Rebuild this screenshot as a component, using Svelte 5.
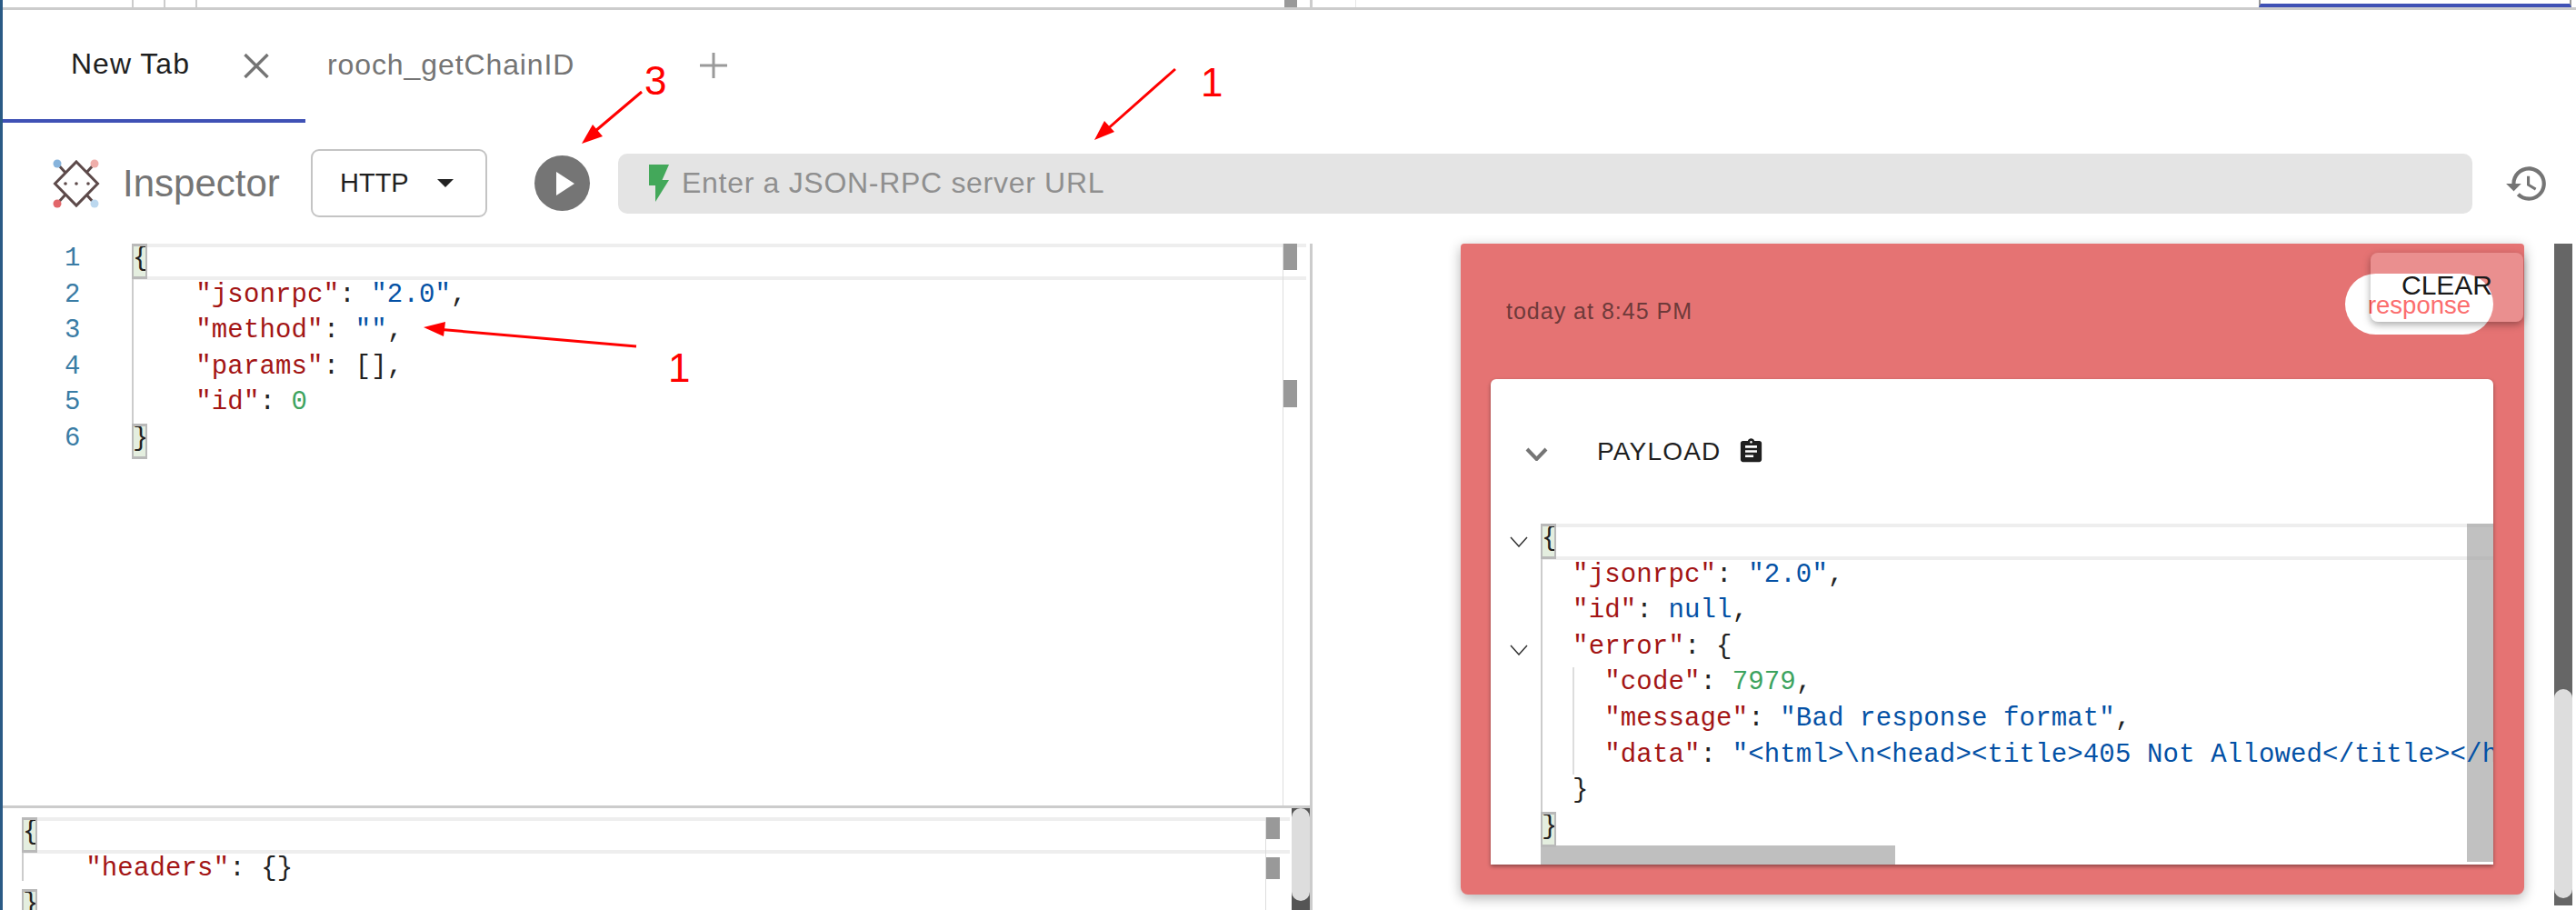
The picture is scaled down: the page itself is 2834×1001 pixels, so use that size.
<script>
  const requestLines = [
    [["p", "{"]],
    [["p", "    "], ["k", '"jsonrpc"'], ["p", ": "], ["s", '"2.0"'], ["p", ","]],
    [["p", "    "], ["k", '"method"'], ["p", ": "], ["s", '""'], ["p", ","]],
    [["p", "    "], ["k", '"params"'], ["p", ": [],"]],
    [["p", "    "], ["k", '"id"'], ["p", ": "], ["n", "0"]],
    [["p", "}"]],
  ];

  const headerLines = [
    [["p", "{"]],
    [["p", "    "], ["k", '"headers"'], ["p", ": {}"]],
    [["p", "}"]],
  ];

  const responseLines = [
    [["p", "{"]],
    [["p", "  "], ["k", '"jsonrpc"'], ["p", ": "], ["s", '"2.0"'], ["p", ","]],
    [["p", "  "], ["k", '"id"'], ["p", ": "], ["s", "null"], ["p", ","]],
    [["p", "  "], ["k", '"error"'], ["p", ": {"]],
    [["p", "    "], ["k", '"code"'], ["p", ": "], ["n", "7979"], ["p", ","]],
    [["p", "    "], ["k", '"message"'], ["p", ": "], ["s", '"Bad response format"'], ["p", ","]],
    [["p", "    "], ["k", '"data"'], ["p", ": "], ["s", '"<html>\\n<head><title>405 Not Allowed</title></head>\\n<body>'], ["p", ""]],
    [["p", "  }"]],
    [["p", "}"]],
  ];

  const isBracket = (i, total) => i === 0 || i === total - 1;
</script>

{#snippet code(lines)}
  {#each lines as line, i}
    <div class="line" class:hl={i === 0}>
      {#if isBracket(i, lines.length)}
        <span class="match">{line[0][1]}</span>
      {:else}
        {#each line as t}<span class={t[0]}>{t[1]}</span>{/each}
      {/if}
    </div>
  {/each}
{/snippet}

<div class="page">
  <div class="strip">
    <i class="tick first"></i><i class="tick"></i><i class="tick"></i>
    <i class="strip-thumb"></i>
    <i class="tick last"></i>
    <i class="tick faint"></i>
    <i class="strip-blue"></i>
  </div>

  <div class="tabs">
    <div class="tab active">
      <span>New Tab</span>
      <svg class="close" viewBox="0 0 28 28"><path d="M1 1 27 27M27 1 1 27" /></svg>
    </div>
    <div class="tab other">rooch_getChainID</div>
    <svg class="plus" viewBox="0 0 30 28"><path d="M15 0V28M0 14H30" /></svg>
  </div>

  <div class="toolbar">
    <svg class="logo" viewBox="0 0 52 60">
      <path class="wire" d="M5 8 14 18M46 8 37 18M5 52 14 42M46 52 37 42" />
      <path class="wire" d="M26 6 49.5 30 26 54 2.500 30Z" />
      <circle cx="14" cy="30" r="1.800" fill="#5d4a4a" />
      <circle cx="26" cy="30" r="1.800" fill="#5d4a4a" />
      <circle cx="39" cy="30" r="1.800" fill="#5d4a4a" />
      <circle cx="5" cy="8" r="4.500" fill="#86b3dc" />
      <circle cx="46" cy="8" r="4.500" fill="#efaeaa" />
      <circle cx="5" cy="52" r="4.500" fill="#e2666a" />
      <circle cx="46" cy="52" r="4.500" fill="#bcd8ef" />
    </svg>
    <span class="brand">Inspector</span>
    <div class="select"><span>HTTP</span><i class="caret"></i></div>
    <div class="play"><i></i></div>
    <div class="url">
      <svg class="bolt" viewBox="0 0 22 41"><path d="M0 0H22L14.500 17H22L7 41V23H0Z" /></svg>
      <span>Enter a JSON-RPC server URL</span>
    </div>
    <svg class="history" viewBox="0 0 24 24">
      <path d="M13 3c-4.970 0-9 4.030-9 9H1l3.890 3.890.070.140L9 12H6c0-3.870 3.130-7 7-7s7 3.130 7 7-3.130 7-7 7c-1.930 0-3.680-.790-4.940-2.060l-1.420 1.420C8.270 19.990 10.510 21 13 21c4.970 0 9-4.030 9-9s-4.030-9-9-9zm-1 5v5l4.280 2.540.720-1.210-3.500-2.080V8H12z" />
    </svg>
  </div>

  <div class="main">
    <div class="left">
      <div class="editor request">
        <div class="numbers">
          {#each requestLines as _, i}<div class="line">{i + 1}</div>{/each}
        </div>
        <div class="content">{@render code(requestLines)}</div>
        <i class="minimap"><b></b><b class="second"></b></i>
      </div>
      <div class="editor headers">
        <div class="content">{@render code(headerLines)}</div>
        <i class="minimap"><b></b><b class="second"></b></i>
        <div class="pane-scroll"><i></i></div>
      </div>
    </div>

    <div class="right">
      <div class="card">
        <div class="card-head">today at 8:45 PM</div>
        <div class="chip">response</div>
        <div class="clear">CLEAR</div>
        <div class="inner">
          <div class="payload">
            <svg class="chev" viewBox="0 0 25 15"><path d="M2 2 12.500 13 23 2" /></svg>
            <span>PAYLOAD</span>
            <svg class="clip" viewBox="0 0 24 24">
              <path d="M19 3h-4.180C14.400 1.840 13.300 1 12 1c-1.300 0-2.400.840-2.820 2H5c-1.100 0-2 .900-2 2v14c0 1.100.900 2 2 2h14c1.100 0 2-.900 2-2V5c0-1.100-.900-2-2-2zm-7 0c.550 0 1 .450 1 1s-.450 1-1 1-1-.450-1-1 .450-1 1-1zm2 14H7v-2h7v2zm3-4H7v-2h10v2zm0-4H7V7h10v2z" />
            </svg>
          </div>
          <div class="editor response">
            <div class="folds">
              {#each responseLines as _, i}
                <div class="line">
                  {#if i === 0 || i === 3}
                    <svg viewBox="0 0 20 12"><path d="M1 1 10 11 19 1" /></svg>
                  {/if}
                </div>
              {/each}
            </div>
            <div class="content">
              {@render code(responseLines)}
              <i class="guide"></i>
            </div>
            <i class="vbar"></i>
            <i class="hbar"></i>
          </div>
        </div>
      </div>
      <div class="page-scroll"><i></i></div>
    </div>
  </div>

  <!-- red annotations drawn on top of the screenshot -->
  <svg class="notes" viewBox="0 0 2834 1001">
    <path d="M706 101 648 150M1293 76 1215 145M700 381 480 362" />
    <polygon points="640,158 652,137 663,150" />
    <polygon points="1204,154 1215,133 1226,145" />
    <polygon points="466,360 490,354 488,370" />
  </svg>
  <span class="num n3">3</span>
  <span class="num n1a">1</span>
  <span class="num n1b">1</span>
</div>

<style>
  :global(body) {
    margin: 0;
    background: #fff;
  }

  .page {
    position: relative;
    width: 2834px;
    height: 1001px;
    overflow: hidden;
    box-sizing: border-box;
    border-left: 3px solid #2a5a85;
    background: #fff;
    font-family: "Liberation Sans", Arial, sans-serif;
  }

  .strip {
    display: flex;
    height: 8px;
    border-bottom: 3px solid #ccc;
  }

  .tick {
    display: block;
    width: 33px;
    border-left: 2px solid #ccc;
  }

  .tick.first {
    margin-left: 142px;
  }

  .strip-thumb {
    display: block;
    width: 14px;
    margin-left: 1163px;
    background: #999;
  }

  .tick.last {
    width: 0;
    margin-left: 14px;
    border-left: 3px solid #ccc;
  }

  .tick.faint {
    width: 0;
    margin-left: 47px;
    border-left: 1px solid #e6e6e6;
  }

  .strip-blue {
    display: block;
    flex: none;
    box-sizing: border-box;
    width: 344px;
    height: 8px;
    margin-left: 993px;
    border-left: 2px solid #999;
    border-right: 2px solid #999;
    border-bottom: 4px solid #3f51b5;
  }

  .tabs {
    display: flex;
    align-items: stretch;
    height: 124px;
  }

  .tab {
    display: flex;
    align-items: center;
    box-sizing: border-box;
    font-size: 32px;
    color: #757575;
  }

  .tab.active {
    width: 333px;
    padding-left: 75px;
    padding-bottom: 2px;
    border-bottom: 4px solid #3f51b5;
    color: #1f1f1f;
    letter-spacing: 1px;
  }

  .tab.other {
    padding: 0 0 4px 24px;
    letter-spacing: 0.9px;
  }

  .close {
    width: 30px;
    height: 27px;
    margin-left: 58px;
    margin-top: 4px;
    fill: none;
    stroke: #757575;
    stroke-width: 3.500;
  }

  .plus {
    align-self: center;
    width: 30px;
    height: 28px;
    margin: 0 0 2px 138px;
    fill: none;
    stroke: #9a9a9a;
    stroke-width: 3;
  }

  .toolbar {
    display: flex;
    align-items: center;
    height: 133px;
    padding-left: 55px;
  }

  .logo {
    width: 52px;
    height: 60px;
    flex: none;
  }

  .wire {
    fill: none;
    stroke: #5d4a4a;
    stroke-width: 3;
  }

  .brand {
    width: 174px;
    margin-left: 25px;
    font-size: 42px;
    color: #757575;
  }

  .select {
    display: flex;
    align-items: center;
    box-sizing: border-box;
    width: 194px;
    height: 75px;
    margin-left: 33px;
    padding-left: 30px;
    border: 2px solid #c4c4c4;
    border-radius: 9px;
    font-size: 29px;
    color: #1f1f1f;
  }

  .caret {
    width: 0;
    height: 0;
    margin-left: 31px;
    border-left: 9px solid transparent;
    border-right: 9px solid transparent;
    border-top: 9px solid #222;
  }

  .play {
    display: flex;
    align-items: center;
    justify-content: center;
    flex: none;
    width: 61px;
    height: 61px;
    margin-left: 52px;
    border-radius: 50%;
    background: #757575;
  }

  .play i {
    width: 0;
    height: 0;
    margin-left: 7px;
    border-left: 20px solid #fff;
    border-top: 13px solid transparent;
    border-bottom: 13px solid transparent;
  }

  .url {
    display: flex;
    align-items: center;
    width: 2040px;
    height: 66px;
    margin-left: 31px;
    box-sizing: border-box;
    padding-left: 34px;
    border-radius: 10px;
    background: #e4e4e4;
    font-size: 32px;
    letter-spacing: 0.7px;
    color: #8f8f8f;
  }

  .bolt {
    width: 22px;
    height: 41px;
    margin-right: 14px;
    fill: #43a85a;
  }

  .history {
    width: 50px;
    height: 50px;
    margin-left: 35px;
    fill: #757575;
  }

  .main {
    display: grid;
    grid-template-columns: 1441px 1fr;
    height: 733px;
  }

  .left {
    display: grid;
    grid-template-rows: 621px 1fr;
    border-right: 3px solid #ccc;
  }

  .editor {
    position: relative;
    display: flex;
    overflow: hidden;
    font-family: "Liberation Mono", "Courier New", monospace;
    font-size: 29px;
    letter-spacing: 0.15px;
    color: #222;
  }

  .request {
    border-bottom: 3px solid #ccc;
  }

  .line {
    box-sizing: border-box;
    height: 39.6px;
    line-height: 33px;
    white-space: pre;
  }

  .numbers {
    flex: none;
    width: 142px;
    box-sizing: border-box;
    padding-left: 68px;
    color: #3a7ca5;
  }

  .content {
    position: relative;
    flex: 1;
    min-width: 0;
    margin-right: 4px;
  }

  .content::before {
    content: "";
    position: absolute;
    left: 0;
    top: 0;
    bottom: 0;
    width: 2px;
    background: #ccc;
  }

  .request .content::after,
  .response .content::after,
  .headers .content::after {
    content: "";
    position: absolute;
    left: 0;
    right: 0;
    top: 199px;
    bottom: 0;
    background: #fff;
  }

  .response .content::after {
    top: 356px;
  }

  .headers .content::after {
    top: 80px;
  }

  .line > span {
    position: relative;
    z-index: 1;
  }

  .hl {
    box-shadow: inset 0 4px #eee, inset 0 -4px #eee;
  }

  .line > .match {
    display: inline-block;
    box-sizing: border-box;
    width: 17px;
    height: 39px;
    border: 3px solid #b9b9b9;
    border-width: 3px 2px;
    background: #e4eedf;
    line-height: 27px;
    overflow: hidden;
    vertical-align: top;
    text-indent: -1px;
    z-index: 2;
  }

  .k {
    color: #a31515;
  }

  .s {
    color: #0451a5;
  }

  .n {
    color: #3ca35e;
  }

  .p {
    color: #222;
  }

  .minimap {
    position: absolute;
    top: 0;
    bottom: 0;
    right: 14px;
    width: 15px;
    border-left: 1px solid #ddd;
  }

  .minimap b {
    display: block;
    height: 29px;
    background: #999;
  }

  .minimap .second {
    margin-top: 121px;
    height: 30px;
  }

  .headers .content {
    margin-left: 21px;
    margin-right: 22px;
    padding-top: 10px;
  }

  .headers .content::before {
    top: 10px;
  }

  .headers .minimap {
    top: 10px;
    right: 33px;
  }

  .headers .minimap b {
    height: 24px;
  }

  .headers .minimap .second {
    margin-top: 20px;
  }

  .pane-scroll {
    position: absolute;
    top: 0;
    right: 0;
    bottom: 0;
    width: 20px;
    background: #555;
  }

  .pane-scroll i {
    display: block;
    height: 102px;
    border-radius: 10px;
    background: #ddd;
  }

  .right {
    display: flex;
    align-items: flex-start;
    padding-left: 163px;
  }

  .card {
    position: relative;
    flex: none;
    width: 1170px;
    height: 716px;
    border-radius: 4px 4px 8px 8px;
    background: #e57373;
    box-shadow: 0 4px 14px rgba(0, 0, 0, 0.3);
  }

  .card-head {
    display: flex;
    align-items: center;
    height: 149px;
    padding-left: 50px;
    font-size: 25px;
    letter-spacing: 1px;
    color: #6e3a3a;
  }

  .chip {
    position: absolute;
    top: 33px;
    right: 34px;
    width: 163px;
    height: 67px;
    border-radius: 34px;
    background: #fff;
    color: #fb4a4a;
    font-size: 27.500px;
    line-height: 69px;
    text-align: center;
  }

  .clear {
    position: absolute;
    top: 10px;
    right: 1px;
    width: 168px;
    height: 76px;
    box-sizing: border-box;
    padding-top: 18px;
    border-radius: 8px;
    background: rgba(255, 255, 255, 0.2);
    box-shadow: 0 3px 8px rgba(0, 0, 0, 0.35);
    color: #1a1a1a;
    font-size: 30px;
    line-height: 36px;
    text-align: center;
  }

  .inner {
    margin: 0 34px 0 33px;
    height: 534px;
    border-radius: 6px 6px 0 0;
    background: #fff;
    box-shadow: 0 2px 4px rgba(0, 0, 0, 0.4);
  }

  .payload {
    display: flex;
    align-items: center;
    height: 159px;
    padding-left: 38px;
    box-sizing: border-box;
    font-size: 28px;
    letter-spacing: 1.200px;
    color: #1f1f1f;
  }

  .chev {
    width: 25px;
    height: 15px;
    margin-right: 54px;
    margin-top: 6px;
    fill: none;
    stroke: #757575;
    stroke-width: 4;
  }

  .clip {
    width: 31px;
    height: 31px;
    margin-left: 17px;
    fill: #1f1f1f;
  }

  .response {
    height: 375px;
  }

  .folds {
    flex: none;
    width: 55px;
    box-sizing: border-box;
    padding: 0 14px 0 21px;
  }

  .folds svg {
    display: block;
    width: 20px;
    height: 12px;
    padding-top: 14px;
    fill: none;
    stroke: #333;
    stroke-width: 1.500;
  }

  .response .content {
    margin-right: 0;
  }

  .guide {
    position: absolute;
    left: 35px;
    top: 158px;
    width: 2px;
    height: 118px;
    background: #ddd;
  }

  .vbar {
    position: absolute;
    top: 0;
    right: 0;
    bottom: 3px;
    width: 29px;
    background: rgba(160, 160, 160, 0.65);
  }

  .hbar {
    position: absolute;
    left: 55px;
    bottom: 0;
    width: 390px;
    height: 21px;
    background: #bfbfbf;
  }

  .page-scroll {
    flex: none;
    width: 20px;
    height: 728px;
    margin-left: 33px;
    background: #666;
  }

  .page-scroll i {
    display: block;
    height: 230px;
    margin-top: 490px;
    border-radius: 10px;
    background: #ddd;
  }

  .notes {
    position: absolute;
    left: -3px;
    top: 0;
    width: 2834px;
    height: 1001px;
    pointer-events: none;
  }

  .notes path {
    fill: none;
    stroke: #f00;
    stroke-width: 3;
  }

  .notes polygon {
    fill: #f00;
  }

  .num {
    position: absolute;
    color: #f00;
    font-size: 44px;
    line-height: 44px;
  }

  .n3 {
    left: 706px;
    top: 67px;
  }

  .n1a {
    left: 1318px;
    top: 69px;
  }

  .n1b {
    left: 732px;
    top: 383px;
  }
</style>
